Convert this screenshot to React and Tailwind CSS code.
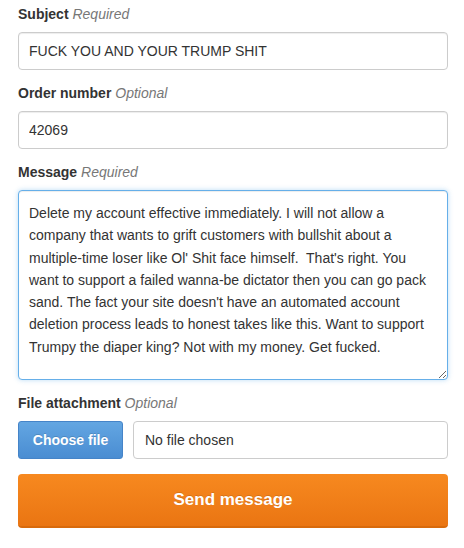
import React from "react";

const message =
  "Delete my account effective immediately. I will not allow a company that wants to grift customers with bullshit about a multiple-time loser like Ol' Shit face himself.  That's right. You want to support a failed wanna-be dictator then you can go pack sand. The fact your site doesn't have an automated account deletion process leads to honest takes like this. Want to support Trumpy the diaper king? Not with my money. Get fucked.";

function Label({ title, hint }) {
  return (
    <div className="h-[20px] leading-[20px] mb-2 text-[14px]">
      <span className="font-bold text-[#333]">{title}</span>{" "}
      <span className="italic text-[#777]">{hint}</span>
    </div>
  );
}

const inputCls =
  "block w-full h-[38px] px-[10px] border border-[#ccc] rounded-[4px] bg-white text-[14px] text-[#333] shadow-[inset_0_1px_1px_rgba(0,0,0,0.075)] outline-none";

export default function App() {
  return (
    <div
      className="w-[464px] h-[548px] bg-white px-[18px] pt-1 text-[#333]"
      style={{ fontFamily: '"Liberation Sans", Arial, sans-serif' }}
    >
      <div className="w-[430px]">
        <div className="mb-[13px]">
          <Label title="Subject" hint="Required" />
          <input className={inputCls} readOnly value="FUCK YOU AND YOUR TRUMP SHIT" />
        </div>
        <div className="mb-[13px]">
          <Label title="Order number" hint="Optional" />
          <input className={inputCls} readOnly value="42069" />
        </div>
        <div className="mb-[13px]">
          <Label title="Message" hint="Required" />
          <textarea
            readOnly
            value={message}
            className="block w-full h-[190px] px-[10px] pt-[11px] pb-[9px] border border-[#66afe9] rounded-[4px] bg-white text-[14px] leading-[22.3px] text-[#333] outline-none resize-y overflow-hidden shadow-[inset_0_1px_1px_rgba(0,0,0,0.075),0_0_5px_rgba(102,175,233,0.45)]"
            style={{ fontFamily: '"Liberation Sans", Arial, sans-serif' }}
          />
        </div>
        <div className="mb-[15px]">
          <Label title="File attachment" hint="Optional" />
          <div className="flex gap-[10px]">
            <button className="w-[105px] h-[38px] shrink-0 rounded-[3px] border border-[#4584c8] bg-gradient-to-b from-[#63a6e2] to-[#4a8dd2] text-white font-bold text-[14px] [text-shadow:0_-1px_0_rgba(0,0,0,0.15)]">
              Choose file
            </button>
            <div className="flex-1 h-[38px] flex items-center px-[11px] border border-[#ccc] rounded-[4px] text-[14px] text-[#333]">
              No file chosen
            </div>
          </div>
        </div>
        <button className="w-full h-[54px] rounded-[4px] border-b-2 border-[#d86a0c] bg-gradient-to-b from-[#f7891f] to-[#ea7512] text-white font-bold text-[17px] [text-shadow:0_-1px_0_rgba(0,0,0,0.12)]">
          Send message
        </button>
      </div>
    </div>
  );
}
